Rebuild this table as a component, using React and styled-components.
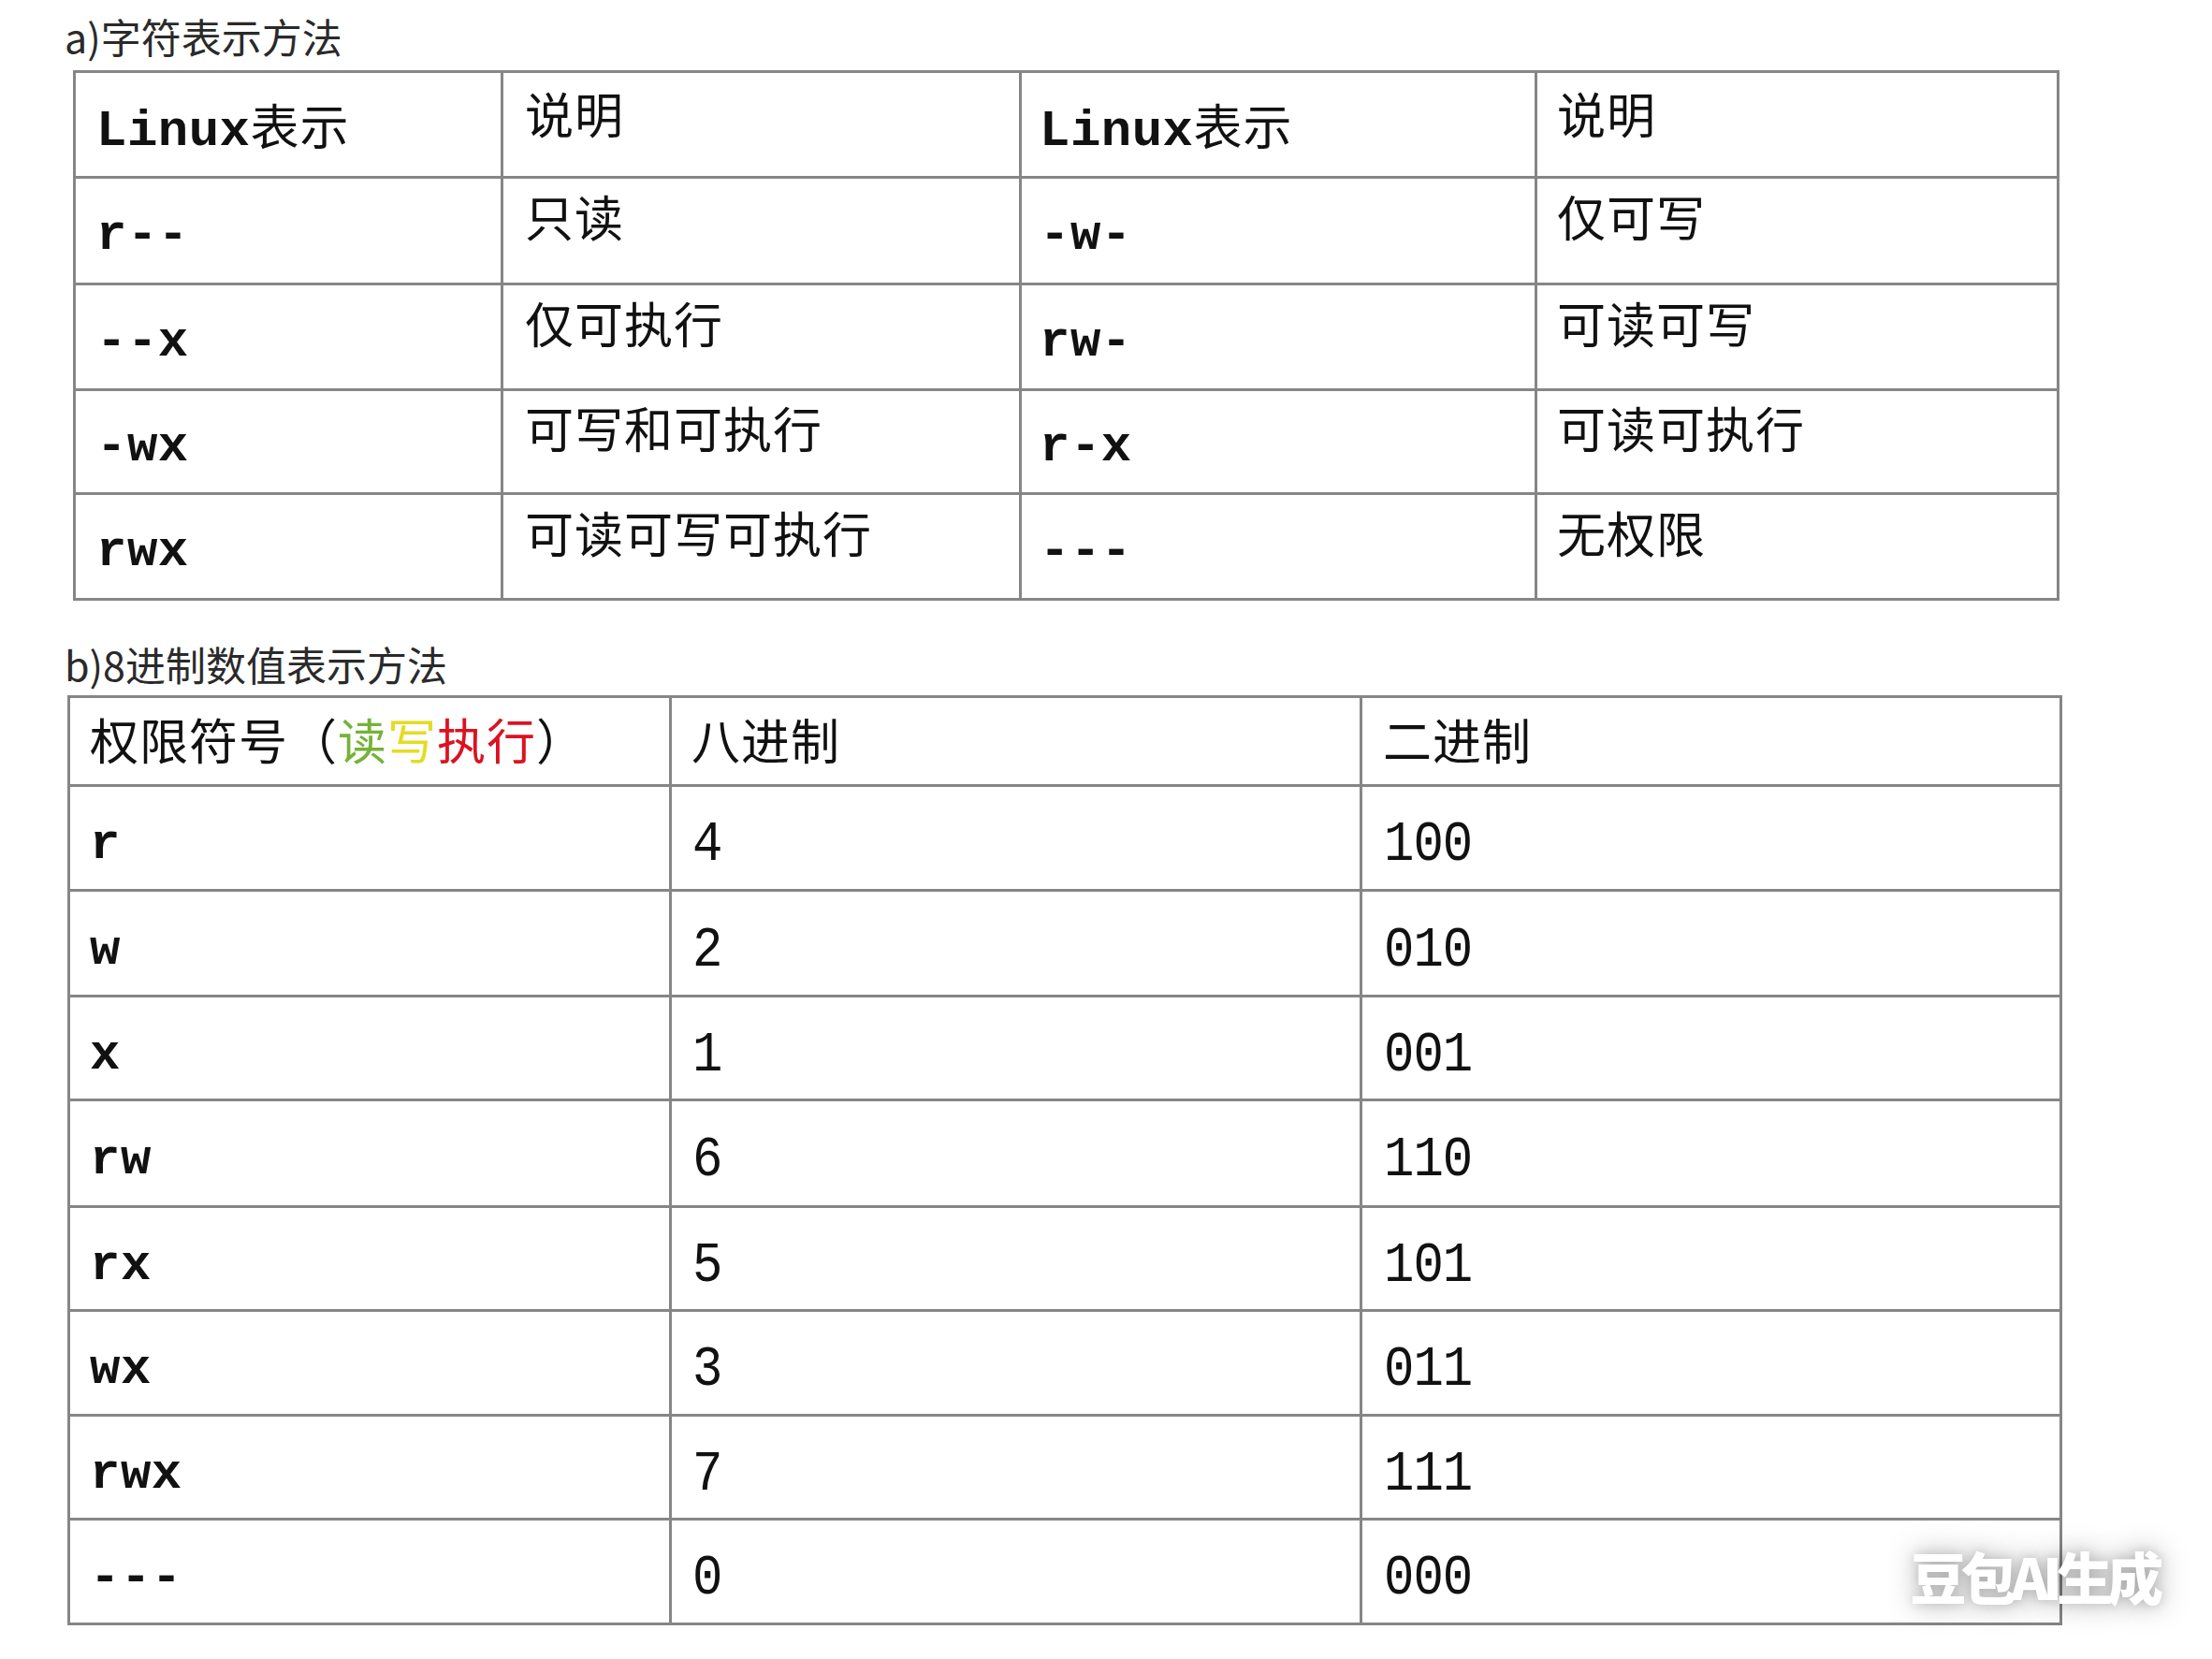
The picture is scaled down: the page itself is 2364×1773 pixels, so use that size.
import React from "react";
import styled, { createGlobalStyle } from "styled-components";

const Global = createGlobalStyle`
  html, body { margin: 0; padding: 0; background: #ffffff; }
  body { font-family: "Noto Sans CJK SC", "Noto Sans", sans-serif; }
`;

const Page = styled.div`
  position: relative;
  box-sizing: border-box;
  width: 2364px;
  min-height: 1773px;
  padding: 13px 0 0 69px;
  background: #fff;
`;

const Title = styled.div`
  font-family: "Noto Sans CJK SC", "Noto Sans", sans-serif;
  font-size: 43px;
  line-height: 50px;
  height: 50px;
  color: #2a2a2a;
  font-weight: 400;
  letter-spacing: 0px;
  margin-top: ${(p) => p.$top || 0}px;
`;

const Table = styled.table`
  border-collapse: collapse;
  table-layout: fixed;
  width: ${(p) => p.$width}px;
  margin-left: ${(p) => p.$left}px;
  margin-top: ${(p) => p.$top}px;
  border: 3px solid #868686;
`;

const Row = styled.tr`
  height: ${(p) => p.$h}px;
`;

const Cell = styled.td`
  border: 3px solid #868686;
  padding: ${(p) => p.$drop || 0}px 0 ${(p) => p.$lift || 0}px ${(p) => p.$pad || 24}px;
  vertical-align: middle;
  white-space: nowrap;
  color: #111;
`;

const Mono = styled.span`
  font-family: "Liberation Mono", "DejaVu Sans Mono", monospace;
  font-weight: 700;
  font-size: 54px;
  letter-spacing: 0.5px;
`;

const Digits = styled.span`
  font-family: "Liberation Mono", "DejaVu Sans Mono", monospace;
  font-weight: 400;
  font-size: 54px;
  letter-spacing: -1px;
  display: inline-block;
  transform: scaleY(1.12);
`;

const Cjk = styled.span`
  font-family: "Noto Sans CJK SC", "Noto Sans", sans-serif;
  font-size: 52px;
  font-weight: 400;
  letter-spacing: 1px;
  color: ${(p) => p.$color || "#111"};
`;

const Watermark = styled.div`
  position: absolute;
  right: 58px;
  bottom: 46px;
  font-family: "Noto Sans CJK SC", "Noto Sans", sans-serif;
  font-weight: 900;
  font-size: 60px;
  letter-spacing: -6px;
  color: #ffffff;
  text-shadow: 0 0 30px rgba(0, 0, 0, 0.35), 0 0 12px rgba(0, 0, 0, 0.15);
`;

const charRows = [
  ["r--", "只读", "-w-", "仅可写"],
  ["--x", "仅可执行", "rw-", "可读可写"],
  ["-wx", "可写和可执行", "r-x", "可读可执行"],
  ["rwx", "可读可写可执行", "---", "无权限"],
];

const octRows = [
  ["r", "4", "100"],
  ["w", "2", "010"],
  ["x", "1", "001"],
  ["rw", "6", "110"],
  ["rx", "5", "101"],
  ["wx", "3", "011"],
  ["rwx", "7", "111"],
  ["---", "0", "000"],
];

const rowHA = [113, 114, 113, 111, 113];
const rowHB = [112, 113, 111, 114, 111, 112, 111, 112];

export default function App() {
  return (
    <Page>
      <Global />
      <Title>a)字符表示方法</Title>
      <Table $width={2120} $left={9} $top={12}>
        <colgroup>
          <col style={{ width: 457 }} />
          <col style={{ width: 554 }} />
          <col style={{ width: 551 }} />
          <col style={{ width: 558 }} />
        </colgroup>
        <tbody>
          <Row $h={rowHA[0]}>
            <Cell $pad={22}>
              <Mono>Linux</Mono>
              <Cjk>表示</Cjk>
            </Cell>
            <Cell $pad={23} $lift={25}>
              <Cjk>说明</Cjk>
            </Cell>
            <Cell $pad={19}>
              <Mono>Linux</Mono>
              <Cjk>表示</Cjk>
            </Cell>
            <Cell $pad={21} $lift={25}>
              <Cjk>说明</Cjk>
            </Cell>
          </Row>
          {charRows.map((r, i) => (
            <Row key={i} $h={rowHA[i + 1]}>
              <Cell $pad={22} $drop={10}>
                <Mono>{r[0]}</Mono>
              </Cell>
              <Cell $pad={23} $lift={32}>
                <Cjk>{r[1]}</Cjk>
              </Cell>
              <Cell $pad={19} $drop={10}>
                <Mono>{r[2]}</Mono>
              </Cell>
              <Cell $pad={21} $lift={32}>
                <Cjk>{r[3]}</Cjk>
              </Cell>
            </Row>
          ))}
        </tbody>
      </Table>

      <Title $top={42}>b)8进制数值表示方法</Title>
      <Table $width={2129} $left={3} $top={9}>
        <colgroup>
          <col style={{ width: 643 }} />
          <col style={{ width: 738 }} />
          <col style={{ width: 748 }} />
        </colgroup>
        <tbody>
          <Row $h={95}>
            <Cell $pad={21} $lift={6}>
              <Cjk>权限符号（</Cjk>
              <Cjk $color="#76b23a">读</Cjk>
              <Cjk $color="#e4dc22">写</Cjk>
              <Cjk $color="#dc1221">执行</Cjk>
              <Cjk>）</Cjk>
            </Cell>
            <Cell $pad={21} $lift={6}>
              <Cjk>八进制</Cjk>
            </Cell>
            <Cell $pad={22} $lift={6}>
              <Cjk>二进制</Cjk>
            </Cell>
          </Row>
          {octRows.map((r, i) => (
            <Row key={i} $h={rowHB[i]}>
              <Cell $pad={21} $drop={14}>
                <Mono>{r[0]}</Mono>
              </Cell>
              <Cell $pad={22} $drop={14}>
                <Digits>{r[1]}</Digits>
              </Cell>
              <Cell $pad={23} $drop={14}>
                <Digits>{r[2]}</Digits>
              </Cell>
            </Row>
          ))}
        </tbody>
      </Table>
      <Watermark>豆包AI生成</Watermark>
    </Page>
  );
}
